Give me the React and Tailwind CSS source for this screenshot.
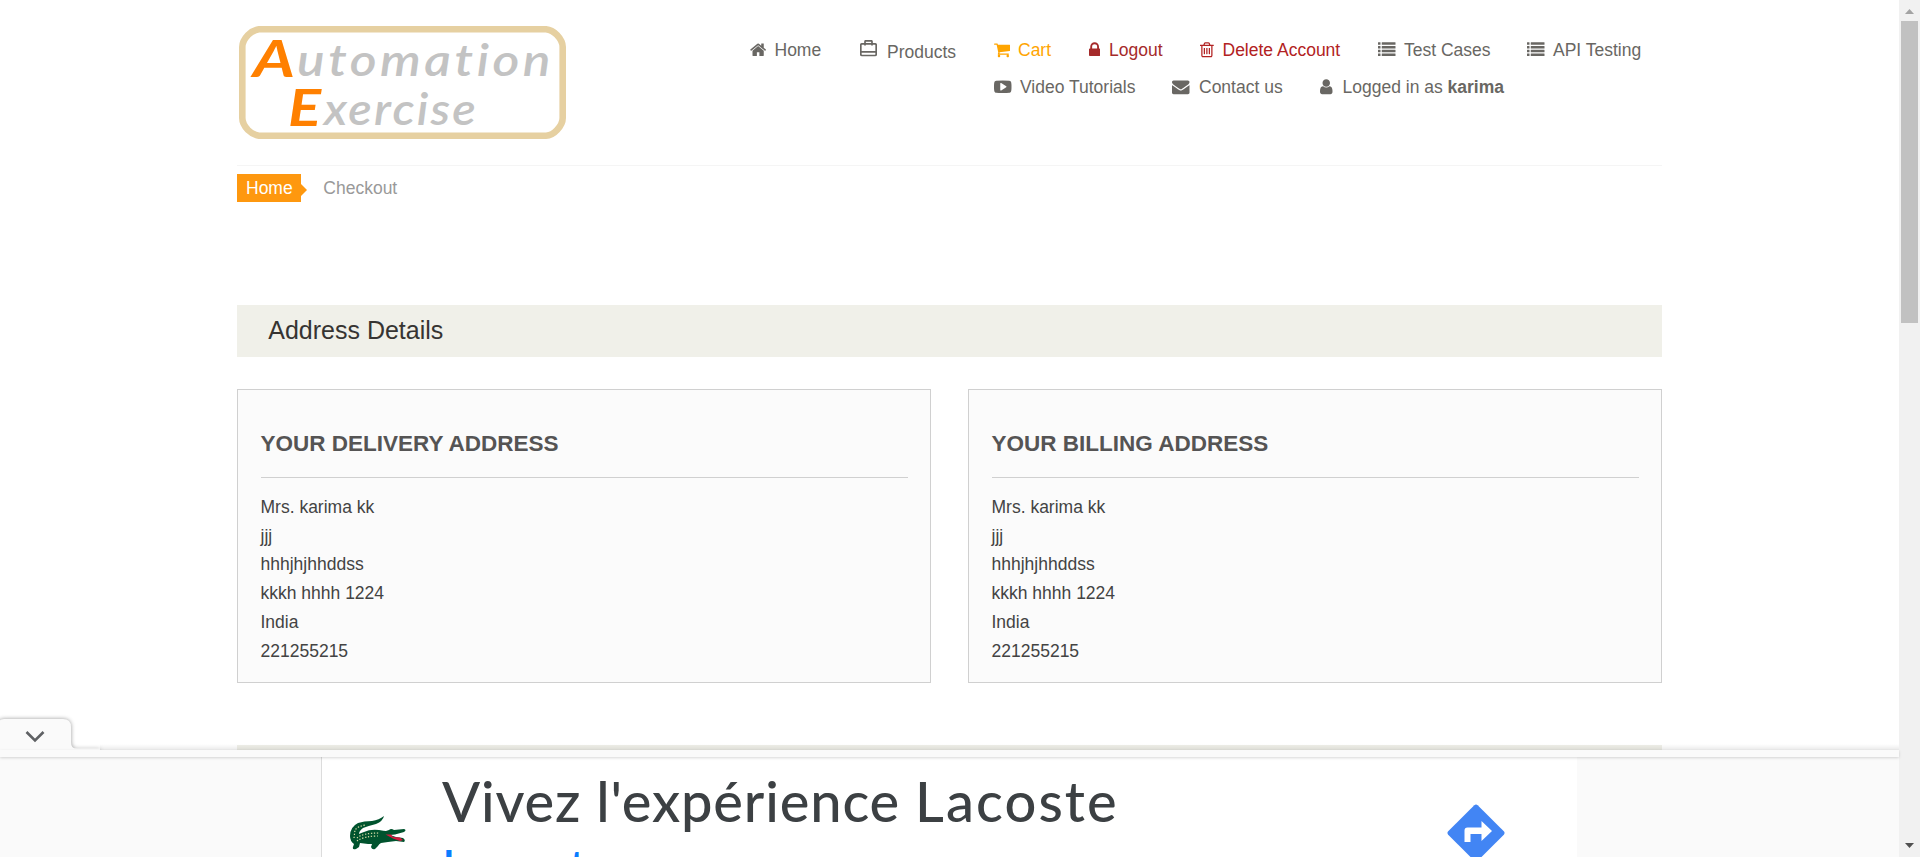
import React from "react";

const GLYPHS = {
  home: {
    box: "64 0 1664 1792",
    d: "M1472 992v480q0 26-19 45t-45 19h-384v-384h-256v384h-384q-26 0-45-19t-19-45v-480q0-1 .5-3t.5-3l575-474 575 474q1 2 1 6zm223-69l-62 74q-8 9-21 11h-3q-13 0-21-7l-692-577-692 577q-12 8-24 7-13-2-21-11l-62-74q-8-10-7-23.5t11-21.5l719-599q32-26 76-26t76 26l244 204v-195q0-14 9-23t23-9h192q14 0 23 9t9 23v408l219 182q10 8 11 21.5t-7 23.5z",
  },
  cart: {
    box: "64 0 1664 1792",
    d: "M704 1536q0 52-38 90t-90 38-90-38-38-90 38-90 90-38 90 38 38 90zm896 0q0 52-38 90t-90 38-90-38-38-90 38-90 90-38 90 38 38 90zm128-1088v512q0 24-16.5 42.5t-40.5 21.5l-1044 122q13 60 13 70 0 16-24 64h920q26 0 45 19t19 45-19 45-45 19h-1024q-26 0-45-19t-19-45q0-11 8-31.5t16-36 21.5-40 15.5-29.5l-177-823h-204q-26 0-45-19t-19-45 19-45 45-19h256q16 0 28.5 6.5t19.5 15.5 13 24.5 8 26 5.5 29.5 4.5 26h1201q26 0 45 19t19 45z",
  },
  lock: {
    box: "320 0 1152 1792",
    d: "M640 768h512v-192q0-106-75-181t-181-75-181 75-75 181v192zm832 96v576q0 40-28 68t-68 28h-960q-40 0-68-28t-28-68v-576q0-40 28-68t68-28h32v-192q0-184 132-316t316-132 316 132 132 316v192h32q40 0 68 28t28 68z",
  },
  trash: {
    box: "192 0 1408 1792",
    d: "M704 736v576q0 14-9 23t-23 9h-64q-14 0-23-9t-9-23v-576q0-14 9-23t23-9h64q14 0 23 9t9 23zm256 0v576q0 14-9 23t-23 9h-64q-14 0-23-9t-9-23v-576q0-14 9-23t23-9h64q14 0 23 9t9 23zm256 0v576q0 14-9 23t-23 9h-64q-14 0-23-9t-9-23v-576q0-14 9-23t23-9h64q14 0 23 9t9 23zm128 724v-948h-896v948q0 22 7 40.5t14.5 27 10.5 8.5h832q3 0 10.5-8.5t14.5-27 7-40.5zm-672-1076h448l-48-117q-7-9-17-11h-317q-10 2-17 11zm928 32v64q0 14-9 23t-23 9h-96v948q0 83-47 143.5t-113 60.5h-832q-66 0-113-58.5t-47-141.5v-952h-96q-14 0-23-9t-9-23v-64q0-14 9-23t23-9h309l70-167q15-37 54-63t79-26h320q40 0 79 26t54 63l70 167h309q14 0 23 9t9 23z",
  },
  list: {
    box: "0 0 1792 1792",
    d: "M32 128h192q32 0 32 32v192q0 32-32 32h-192q-32 0-32-32v-192q0-32 32-32zM32 512h192q32 0 32 32v192q0 32-32 32h-192q-32 0-32-32v-192q0-32 32-32zM32 896h192q32 0 32 32v192q0 32-32 32h-192q-32 0-32-32v-192q0-32 32-32zM32 1280h192q32 0 32 32v192q0 32-32 32h-192q-32 0-32-32v-192q0-32 32-32zM416 128h1344q32 0 32 32v192q0 32-32 32h-1344q-32 0-32-32v-192q0-32 32-32zM416 512h1344q32 0 32 32v192q0 32-32 32h-1344q-32 0-32-32v-192q0-32 32-32zM416 896h1344q32 0 32 32v192q0 32-32 32h-1344q-32 0-32-32v-192q0-32 32-32zM416 1280h1344q32 0 32 32v192q0 32-32 32h-1344q-32 0-32-32v-192q0-32 32-32z",
  },
  youtube: {
    box: "0 0 1792 1792",
    d: "M1280 896q0-37-30-54l-512-320q-31-20-65-2-33 18-33 56v640q0 38 33 56 16 8 31 8 20 0 34-10l512-320q30-17 30-54zm512 0q0 96-1 150t-8.500 136.500-22.500 147.500q-16 73-69 123t-124 58q-222 25-671 25t-671-25q-71-8-124.500-58t-69.500-123q-14-65-21.500-147.500t-8.500-136.500-1-150 1-150 8.500-136.500 22.500-147.500q16-73 69-123t124-58q222-25 671-25t671 25q71 8 124.500 58t69.500 123q14 65 21.500 147.500t8.500 136.500 1 150z",
  },
  envelope: {
    box: "0 0 1792 1792",
    d: "M1792 710v794q0 66-47 113t-113 47h-1472q-66 0-113-47t-47-113v-794q44 49 101 87 362 246 497 345 57 42 92.500 65.500t94.500 48 110 24.500h2q51 0 110-24.500t94.500-48 92.500-65.500q170-123 498-345 57-39 100-87zm0-294q0 79-49 151t-122 123q-376 261-468 325-10 7-42.500 31t-54 38.500-52 32.500-57.500 27-50 9h-2q-23 0-50-9t-57.500-27-52-32.500-54-38.500-42.500-31q-91-64-262-182.500t-205-142.500q-62-42-117-115.500t-55-136.500q0-78 41.500-130t118.500-52h1472q65 0 112.500 47t47.500 113z",
  },
  user: {
    box: "256 0 1280 1792",
    d: "M1536 1399q0 109-62.500 187t-150.500 78h-854q-88 0-150.500-78t-62.500-187q0-85 8.500-160.500t31.500-152 58.500-131 94-89 134.500-34.500q131 128 313 128t313-128q76 0 134.500 34.500t94 89 58.500 131 31.500 152 8.500 160.500zm-256-887q0 159-112.500 271.500t-271.500 112.500-271.500-112.500-112.500-271.500 112.500-271.500 271.500-112.500 271.500 112.500 112.500 271.500z",
  },
};

function Glyph({ name }) {
  const g = GLYPHS[name];
  return (
    <svg viewBox={g.box} className="mb-[1.500px] h-[17.5px] w-auto shrink-0" fill="currentColor">
      <path d={g.d} />
    </svg>
  );
}

function SuitcaseGlyph() {
  return (
    <svg viewBox="0 0 17 17" className="mb-1 h-[17px] w-[17px] shrink-0" fill="none" stroke="currentColor" strokeWidth="1.7">
      <rect x="0.8" y="3.800" width="15.400" height="11.700" rx="1.200" />
      <path d="M5 5.500V1.500q0-.7.7-.7h5.600q.7 0 .7.700v4M.8 11.800h15.400" />
    </svg>
  );
}

function NavItem({ icon, width, slot, color = "text-[#696763]", children }) {
  return (
    <li className={`flex h-[37px] shrink-0 items-center ${width} ${color}`}>
      <span className={`flex shrink-0 ${slot}`}>{icon === "suitcase" ? <SuitcaseGlyph /> : <Glyph name={icon} />}</span>
      <a className={icon === "suitcase" ? "pt-1 whitespace-nowrap" : "whitespace-nowrap"}>{children}</a>
    </li>
  );
}

function Logo() {
  return (
    <svg viewBox="0 0 327 113" className="h-[113px] w-[327px]" role="img" aria-label="Automation Exercise">
      <path d="M20 3.300H307Q313 4 318 9Q323.700 15 323.700 21V92Q323.700 98 318 104Q313 109.500 307 109.700H20Q14 109 9 104Q3.300 98 3.300 92V21Q3.300 15 9 9Q14 4 20 3.300Z" fill="#fff" stroke="#e6d0a1" strokeWidth="6.600" />
      <g fontFamily="Lato, sans-serif" fontStyle="italic" fontWeight="700" className="[font-variant-ligatures:none]">
        <text x="14" y="51" fontSize="52" fill="#ff8000" textLength="42" lengthAdjust="spacingAndGlyphs">A</text>
        <text x="58" y="50" fontSize="44" fontWeight="600" fill="#c3c3c3" letterSpacing="3" textLength="257" lengthAdjust="spacingAndGlyphs">utomation</text>
        <text x="49" y="100" fontSize="51" fill="#ff8000" textLength="33" lengthAdjust="spacingAndGlyphs">E</text>
        <text x="85" y="99" fontSize="44" fontWeight="600" fill="#c3c3c3" letterSpacing="2" textLength="154" lengthAdjust="spacingAndGlyphs">xercise</text>
      </g>
    </svg>
  );
}

function AddressCard({ title }) {
  const lines = ["Mrs. karima kk", "jjj", "hhhjhjhhddss", "kkkh hhhh 1224", "India", "221255215"];
  return (
    <section className="h-[294px] w-[694px] border border-[#d0d0d0] bg-[#fbfbfb] px-[22.500px] pt-[38px] text-[#434343]">
      <h3 className="h-[50px] border-b border-[#d0d0d0] pt-[3px] text-[22.5px] leading-[26px] font-bold text-[#555454]">{title}</h3>
      <ul className="pt-[14.800px] leading-[28.750px]">
        {lines.map((line) => (
          <li key={line} className="h-[28.750px]">{line}</li>
        ))}
      </ul>
    </section>
  );
}

function Crocodile() {
  return (
    <svg viewBox="0 0 56 34" className="h-[34px] w-[56px]">
      <path d="M34 0Q33 5 26 8Q18 10 13 12Q9 15 9 18Q11 17 14 16Q20 13 29 14Q34 15 36 15L39 14Q41 12 44 14L54 13Q57 14 54 16L45 18.500L40 19L46 21L53 22Q56 24 54 26L46 25L38 26L31 27Q29 28 28 30L25 33Q22 34 21 31L22 28L18 28L10 27L9 31L6 33Q2 34 3 31L4 28Q0 25 0 20Q0 11 8 7Q14 5 22 5Q29 4 34 0Z" fill="#00532e" />
      <path d="M35.500 18.500L41 18.500L43 21L50 21.500L53 24L50 25L43 22.500Z" fill="#d3173c" />
      <path d="M4 22L5 14Q8 10 16 9M7 22Q12 17 30 17M7 25Q14 20 28 20" fill="none" stroke="#dce0a8" strokeWidth="1.200" strokeDasharray="1.300 1.700" />
    </svg>
  );
}

function AdBanner() {
  return (
    <aside className="absolute bottom-0 left-0 h-[139px] w-[1899px]">
      <div className="relative z-10 flex h-[32px] items-end">
        <svg viewBox="0 0 100 32" className="h-[32px] w-[100px] shrink-0 overflow-visible">
          <path d="M-4 33V9Q-2 1 4 1H63Q71 1 71 9V24Q71 31 77 31H100V33Z" fill="#fafafa" className="drop-shadow-[0_0_2px_rgba(0,0,0,0.4)]" />
          <path d="M0 30.500H100V34H0Z" fill="#fafafa" />
          <path d="M26.500 14L35 22.500L43.500 14" fill="none" stroke="#5f6164" strokeWidth="2.600" />
        </svg>
        <div className="h-[6px] flex-1 bg-linear-to-b from-transparent to-black/8" />
      </div>
      <div className="relative z-10 h-[7px] bg-[#fafafa] shadow-[0_1px_3px_rgba(0,0,0,0.16)]" />
      <div className="flex h-[100px] overflow-hidden bg-[#fafafa] pl-[321px]">
        <div className="flex h-[100px] w-[1256px] shrink-0 border-l border-[#dcdcdc] bg-white">
          <div className="w-[120px] shrink-0 pt-[59px] pl-[28px]">
            <Crocodile />
          </div>
          <div className="w-[1005px] shrink-0 font-[Lato,sans-serif] font-medium">
            <p className="h-[84px] pt-[10px] text-[56px] leading-[68px] tracking-[0.850px] whitespace-nowrap text-[#3c4043]">
              Vivez l'expérience <span className="tracking-[2.100px]">Lacoste</span>
            </p>
            <p className="pt-px text-[48px] leading-[50px] tracking-[1.500px] text-[#0a7cff]">Lacoste</p>
          </div>
          <svg viewBox="0 0 58 58" className="mt-[47px] h-[58px] w-[58px] shrink-0 self-start">
            <path d="M27.300 1.200Q29 -.3 30.700 1.200L56.800 27.300Q58.300 29 56.800 30.700L30.700 56.800Q29 58.300 27.300 56.800L1.200 30.700Q-.3 29 1.200 27.300Z" fill="#4285f4" />
            <path d="M17.500 38V26.500Q17.500 23.500 20.500 23.500H34.500V17L45 27L34.500 37V30H23.500V38Z" fill="#fff" />
          </svg>
        </div>
      </div>
    </aside>
  );
}

function Scrollbar() {
  return (
    <div className="flex h-[857px] w-[21px] shrink-0 flex-col items-center justify-between bg-[#f1f1f1]">
      <div className="flex flex-col items-center">
        <svg viewBox="0 0 9 5" className="mt-[9px] mb-[7px] h-[5px] w-[9px]"><path d="M4.500 0L9 5H0Z" fill="#a3a3a3" /></svg>
        <div className="h-[302px] w-[17px] bg-[#c1c1c1]" />
      </div>
      <svg viewBox="0 0 9 5" className="mb-[9px] h-[5px] w-[9px]"><path d="M0 0H9L4.500 5Z" fill="#505050" /></svg>
    </div>
  );
}

export default function App() {
  return (
    <div className="relative flex h-[857px] w-[1920px] overflow-hidden bg-white font-['Liberation_Sans',Arial,sans-serif] text-[17.5px] leading-[25px]">
      <div className="h-[857px] w-[1899px] shrink-0 overflow-hidden pr-[237px] pl-[237px]">
        <header className="flex h-[166px] border-b border-[#f5f5f5]">
          <div className="w-[513px] shrink-0 pt-[26px] pl-[2px]">
            <Logo />
          </div>
          <nav className="pt-[32px]">
            <ul className="flex">
              <NavItem icon="home" width="w-[110px]" slot="w-[24.500px]">Home</NavItem>
              <NavItem icon="suitcase" width="w-[134px]" slot="w-[27px]">Products</NavItem>
              <NavItem icon="cart" width="w-[95px]" slot="w-[24px]" color="text-[#ffa500]">Cart</NavItem>
              <NavItem icon="lock" width="w-[111px]" slot="w-[20px]" color="text-[#a52a2a]">Logout</NavItem>
              <NavItem icon="trash" width="w-[178px]" slot="w-[22.500px]" color="text-[#b22222]">Delete Account</NavItem>
              <NavItem icon="list" width="w-[149px]" slot="w-[26px]">Test Cases</NavItem>
              <NavItem icon="list" width="w-[130px]" slot="w-[26px]">API Testing</NavItem>
            </ul>
            <ul className="flex pl-[244px]">
              <NavItem icon="youtube" width="w-[178px]" slot="w-[26px]">Video Tutorials</NavItem>
              <NavItem icon="envelope" width="w-[148px]" slot="w-[27px]">Contact us</NavItem>
              <NavItem icon="user" width="w-[190px]" slot="w-[22.500px]"><>Logged in as <b>karima</b></></NavItem>
            </ul>
          </nav>
        </header>
        <ol className="flex h-[139px] items-start pt-2">
          <li className="h-[28px] w-[64px] bg-[#fe980f] pl-[9px] leading-[28px] text-white">Home</li>
          <li className="flex h-[28px] items-center leading-[28px] text-[#999]">
            <svg viewBox="0 0 6 12" className="mt-1 mr-[16.300px] h-[12px] w-[6px]"><path d="M0 0L6 6L0 12Z" fill="#fe980f" /></svg>
            Checkout
          </li>
        </ol>
        <h2 className="h-[52px] bg-[#f0f0e9] pl-[31.250px] text-[25px] leading-[51px] text-[#363432]">Address Details</h2>
        <div className="flex justify-between pt-8">
          <AddressCard title="YOUR DELIVERY ADDRESS" />
          <AddressCard title="YOUR BILLING ADDRESS" />
        </div>
        <div className="mt-[62px] h-[52px] bg-[#f0f0e9]" />
      </div>
      <Scrollbar />
      <AdBanner />
    </div>
  );
}
